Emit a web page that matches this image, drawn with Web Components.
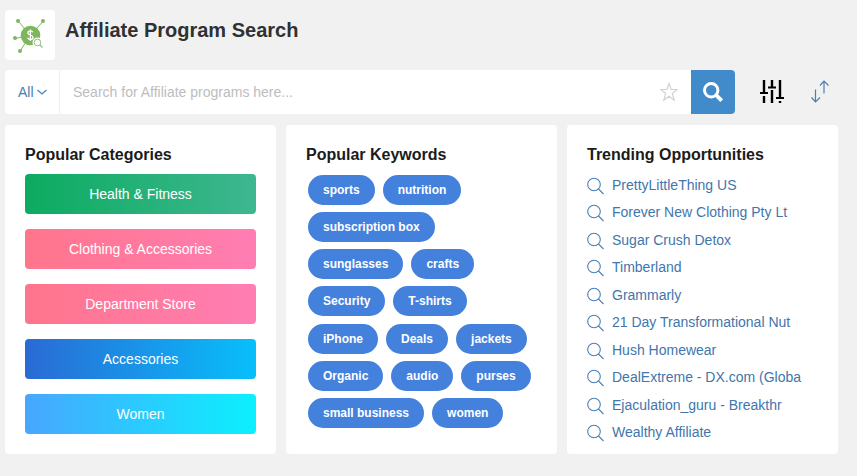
<!DOCTYPE html>
<html lang="en">
<head>
<meta charset="utf-8">
<title>Affiliate Program Search</title>
<style>
body{margin:0;background:#f1f1f1;color:#333;font:14px/20px "Liberation Sans",Arial,sans-serif}
</style>
</head>
<body>
<affiliate-page>
  <page-heading slot="heading">Affiliate Program Search</page-heading>
  <search-bar slot="search"></search-bar>
  <info-card heading="Popular Categories">
    <category-list>
      <category-button tone="green">Health &amp; Fitness</category-button>
      <category-button tone="pink">Clothing &amp; Accessories</category-button>
      <category-button tone="pink">Department Store</category-button>
      <category-button tone="blue">Accessories</category-button>
      <category-button tone="cyan">Women</category-button>
    </category-list>
  </info-card>
  <info-card heading="Popular Keywords">
    <keyword-cloud>
      <keyword-pill>sports</keyword-pill>
      <keyword-pill>nutrition</keyword-pill>
      <keyword-pill>subscription box</keyword-pill>
      <keyword-pill>sunglasses</keyword-pill>
      <keyword-pill>crafts</keyword-pill>
      <keyword-pill>Security</keyword-pill>
      <keyword-pill>T-shirts</keyword-pill>
      <keyword-pill>iPhone</keyword-pill>
      <keyword-pill>Deals</keyword-pill>
      <keyword-pill>jackets</keyword-pill>
      <keyword-pill>Organic</keyword-pill>
      <keyword-pill>audio</keyword-pill>
      <keyword-pill>purses</keyword-pill>
      <keyword-pill>small business</keyword-pill>
      <keyword-pill>women</keyword-pill>
    </keyword-cloud>
  </info-card>
  <info-card heading="Trending Opportunities">
    <trend-list>
      <trend-link>PrettyLittleThing US</trend-link>
      <trend-link>Forever New Clothing Pty Lt</trend-link>
      <trend-link>Sugar Crush Detox</trend-link>
      <trend-link>Timberland</trend-link>
      <trend-link>Grammarly</trend-link>
      <trend-link>21 Day Transformational Nut</trend-link>
      <trend-link>Hush Homewear</trend-link>
      <trend-link>DealExtreme - DX.com (Globa</trend-link>
      <trend-link>Ejaculation_guru - Breakthr</trend-link>
      <trend-link>Wealthy Affiliate</trend-link>
    </trend-list>
  </info-card>
</affiliate-page>
<script>
const base = `*{box-sizing:border-box}button,input,select{font:inherit;margin:0;border:0}button{cursor:pointer}svg{display:block;flex:none}`;
const define = (name, css, html) => customElements.define(name, class extends HTMLElement {
  constructor() {
    super();
    const text = this.getAttribute('heading') || '';
    this.attachShadow({mode: 'open'}).innerHTML = `<style>${base}${css}</style>${html}`;
    const title = this.shadowRoot.querySelector('h2');
    if (title) title.textContent = text;
  }
});

define('affiliate-page', `
:host{display:block;padding:10px 19px 22px 5px}
main{display:grid;gap:10px}
.cards{display:grid;grid-template-columns:repeat(3,minmax(0,1fr));gap:10px;margin-top:1px}
@media(max-width:700px){.cards{grid-template-columns:1fr}}
`, `<main><slot name="heading"></slot><slot name="search"></slot><div class="cards"><slot></slot></div></main>`);

define('page-heading', `
:host{display:flex;gap:10px}
.logo{width:50px;height:50px;border-radius:4px;background:#fff}
h1{margin:0;padding-top:8px;font-size:20px;line-height:24px;color:#2f3133}
`, `<div class="logo"><svg width="50" height="50" viewBox="0 0 50 50" fill="none" aria-hidden="true">
<g stroke="#7db75b" stroke-width="1"><path d="M13.500 11.500 20 19M38 11.500 31 19M10 28.500 17 27M15 41 21 32"/></g>
<g fill="#7db75b"><circle cx="13" cy="11" r="2"/><circle cx="38" cy="11" r="2"/><circle cx="10" cy="28" r="2"/><circle cx="15" cy="41" r="2"/><circle cx="25.500" cy="25.500" r="9.800"/></g>
<path d="M27.800 22.300C27.300 21.200 26.400 20.900 25.400 20.900 23.900 20.900 22.900 21.700 22.900 22.900 22.900 25.600 28 24.400 28 27.400 28 28.700 26.900 29.500 25.400 29.500 24.100 29.500 23.100 28.900 22.600 27.800M25.400 19.500V31" stroke="#fff" stroke-width="1.300"/>
<circle cx="32.500" cy="32.500" r="5" fill="#fff"/><circle cx="32.500" cy="32.500" r="3.300" stroke="#8fc272"/><path d="m35 35 2.500 2.500" stroke="#8fc272" stroke-width="1.300"/>
</svg></div><h1><slot></slot></h1>`);

define('search-bar', `
:host{display:flex;align-items:center}
form{display:flex;flex:1;min-width:0;height:44px;border-radius:4px;background:#fff;overflow:hidden}
.scope{display:grid;align-items:center;width:55px;border-right:1px solid #eee;color:#4a7fb5}
.scope>*{grid-area:1/1}
select{appearance:none;width:100%;height:100%;padding:0 0 0 13px;background:none;color:inherit}
.scope svg{justify-self:end;margin-right:12px;pointer-events:none}
input{flex:1;min-width:0;padding:0 13px;background:none;color:#333}
input::placeholder{color:#bdbdbd;opacity:1}
button{display:grid;place-items:center;padding:0;background:none}
.star{width:44px}
.go{width:44px;background:#428bca}
.tools{display:flex;gap:27px;padding:0 9px 0 25px}
`, `<form onsubmit="return false">
<div class="scope"><select aria-label="Search scope"><option>All</option></select><svg width="10" height="8" viewBox="0 0 10 8" fill="none" stroke="currentColor" stroke-width="1.200" aria-hidden="true"><path d="m.5 2 4.500 4 4.500-4"/></svg></div>
<input type="text" aria-label="Search programs" placeholder="Search for Affiliate programs here...">
<button type="button" class="star" aria-label="Save search"><svg width="18" height="20" viewBox="0 0 18 20" fill="none" stroke="#d2d2d2" stroke-width="1.200"><path d="m9 1.500 2.200 6h6l-4.900 4 1.900 6.700L9 14.300l-5.200 3.900 1.900-6.700-4.900-4h6z"/></svg></button>
<button class="go" aria-label="Search"><svg width="20" height="20" viewBox="0 0 20 20" fill="none" stroke="#fff" stroke-width="3"><circle cx="8.200" cy="8.200" r="6.700"/><path d="m12.700 12.700 6 6" stroke-width="3.800"/></svg></button>
</form>
<div class="tools">
<button aria-label="Filters"><svg width="24" height="24" viewBox="0 0 24 24" stroke="#000" stroke-width="2.400" fill="none"><path d="M4 0v13M4 16v7M12 0v7M12 10v13M20 0v18M20 21v2"/><path d="M0 13h8M8 7.500h8M16 18h8" stroke-width="2"/></svg></button>
<button aria-label="Sort"><svg width="18" height="24" viewBox="0 0 18 24" fill="none" stroke="#4a7fb5" stroke-width="1.200"><path d="M4.500 9.500V22M.5 17.500l4 4.500 4.500-4.500M13 13.500V1M9 5.500 13 1l4.500 4.500"/></svg></button>
</div>`);

define('info-card', `
:host{display:flex;flex-direction:column;border-radius:4px;background:#fff;padding:20px 20px 0}
h2{margin:0 0 9px;font-size:16px;line-height:20px;color:#1b1b1b}
slot{display:flex;flex:1;flex-direction:column}
`, `<h2></h2><slot></slot>`);

define('category-list', `:host{display:grid;gap:15px;padding-bottom:20px}`, `<slot></slot>`);
define('category-button', `
:host{display:block;--fill:linear-gradient(90deg,#0cab60,#3eb790)}
:host([tone=pink]){--fill:linear-gradient(90deg,#ff758c,#ff7eb3)}
:host([tone=blue]){--fill:linear-gradient(90deg,#2a6ad4,#08bffb)}
:host([tone=cyan]){--fill:linear-gradient(90deg,#48a6ff,#0cf0fd)}
button{display:block;width:100%;height:40px;border-radius:4px;background:var(--fill);color:#fff}
`, `<button type="button"><slot></slot></button>`);

define('keyword-cloud', `:host{display:flex;flex:1;flex-wrap:wrap;align-content:space-between;column-gap:8px;padding:1px 2px 26px}`, `<slot></slot>`);
define('keyword-pill', `
:host{display:block}
button{display:block;height:30px;padding:0 15px;border-radius:15px;background:#4481dd;color:#fff;font-size:12px;font-weight:bold}
`, `<button type="button"><slot></slot></button>`);

define('trend-list', `:host{display:flex;flex:1;flex-direction:column;justify-content:space-between;padding:1px 0 12px}`, `<slot></slot>`);
define('trend-link', `
:host{display:block}
a{display:flex;align-items:center;gap:8px;color:#3f76ac;text-decoration:none;white-space:nowrap}
svg{margin-top:2px}
`, `<a href="#"><svg width="17" height="18" viewBox="0 0 17 18" fill="none" stroke="#4a7fb5" stroke-width="1.100" aria-hidden="true"><circle cx="7" cy="7.500" r="6.300"/><path d="m11.500 12 5 5"/></svg><span><slot></slot></span></a>`);
</script>
</body>
</html>
